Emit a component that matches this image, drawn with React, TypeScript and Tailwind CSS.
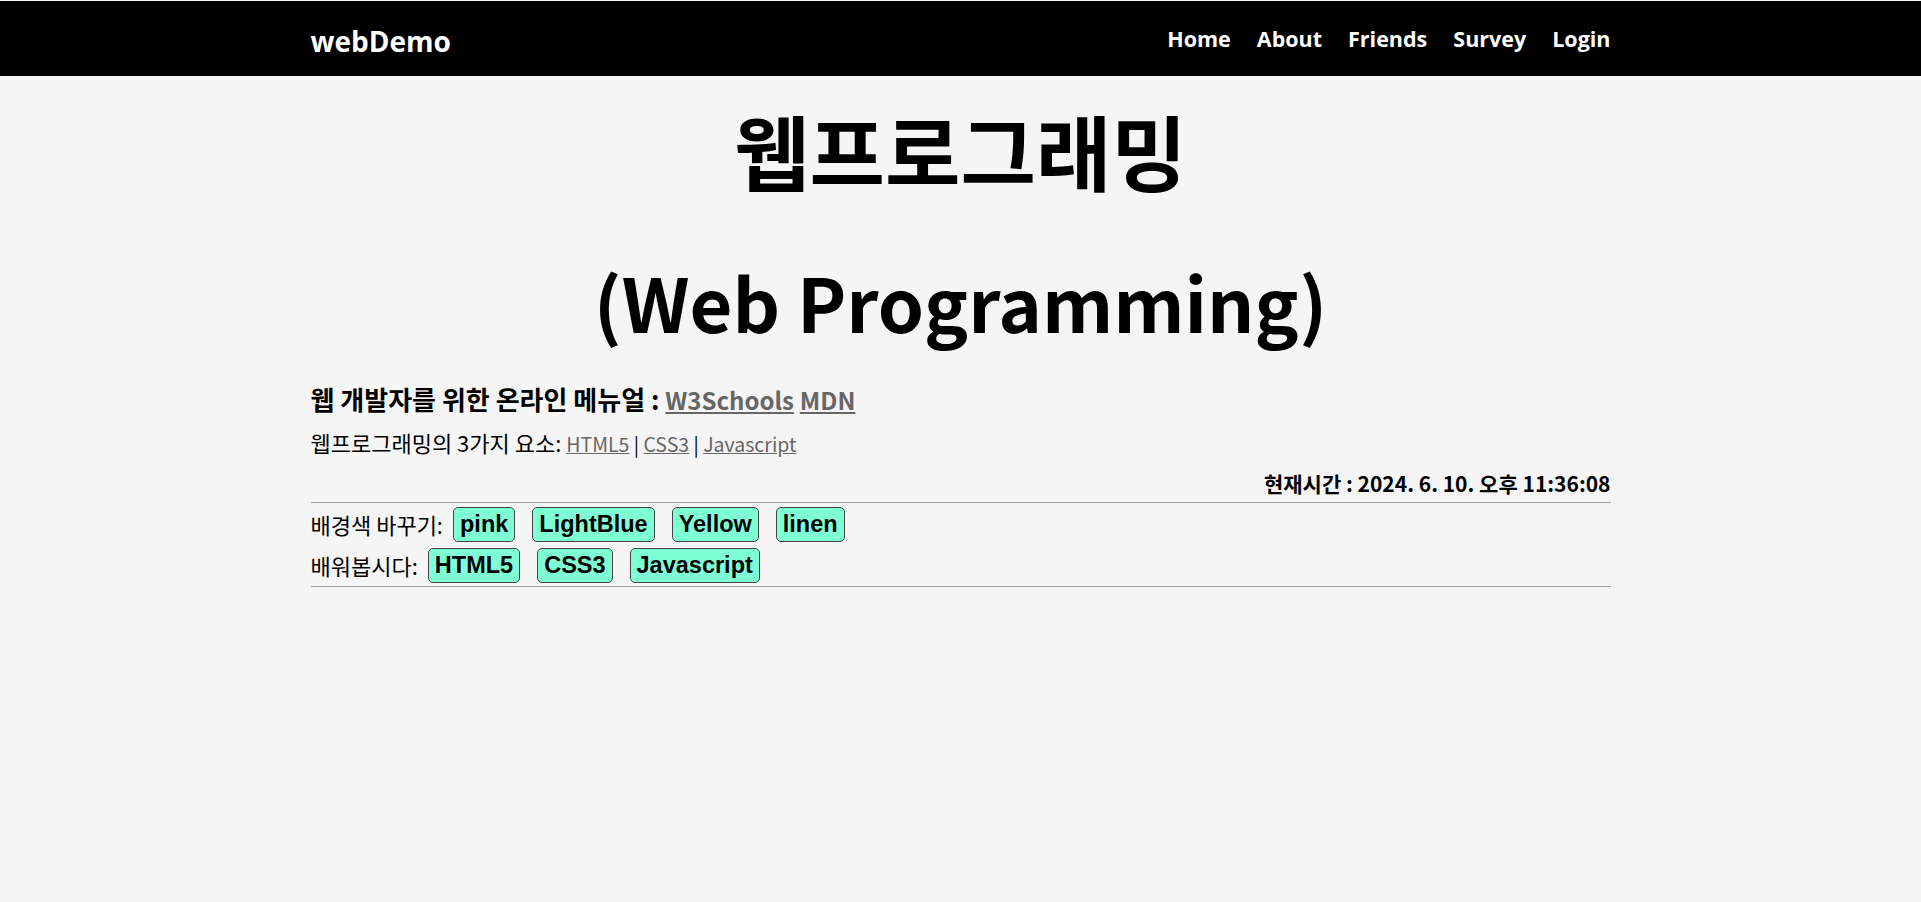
const links = ["Home", "About", "Friends", "Survey", "Login"];
const colors = ["pink", "LightBlue", "Yellow", "linen"];
const learn = ["HTML5", "CSS3", "Javascript"];

function Btn({ label }: { label: string }) {
  return (
    <button className="rounded-[5px] border border-[#444] bg-[#7fffd4] px-[6px] py-[3px] font-['Liberation_Sans',Arial,sans-serif] text-[23.5px] font-bold leading-[27px] text-black">
      {label}
    </button>
  );
}

export default function App() {
  return (
    <div className="min-h-screen bg-[#f5f5f5] pt-px font-['Noto_Sans_CJK_KR','Open_Sans',sans-serif] text-black">
      {/* Nav */}
      <header className="h-[75px] bg-black font-['Open_Sans','Noto_Sans_CJK_KR',sans-serif]">
        <div className="mx-auto flex h-full w-[1300px] items-center justify-between">
          <span className="mt-[4px] text-[28px] font-bold text-white">webDemo</span>
          <nav className="mt-[2px] flex items-center gap-[26px] text-[21.5px] font-bold text-white">
            {links.map((l) => (
              <a key={l} href="#">{l}</a>
            ))}
          </nav>
        </div>
      </header>

      <main className="mx-auto w-[1300px]">
        <h1 className="text-center font-bold">
          <div className="mt-[24px] text-[82px] leading-[100px]">웹프로그래밍</div>
          <div className="mt-[51px] text-[74px] leading-[100px]">(Web Programming)</div>
        </h1>

        <div className="mt-[28px] h-[40px] text-[26px] font-bold leading-[40px]">
          웹 개발자를 위한 온라인 메뉴얼 :{" "}
          <a href="#" className="text-[24px] leading-[20px] text-[#666] underline">W3Schools</a>{" "}
          <a href="#" className="text-[24px] leading-[20px] text-[#666] underline">MDN</a>
        </div>

        <div className="mt-[3px] h-[40px] text-[22px] leading-[40px]">
          웹프로그래밍의 3가지 요소:{" "}
          <span className="text-[19.5px] leading-[20px]">
            <a href="#" className="text-[#666] underline">HTML5</a>&nbsp;|{" "}
            <a href="#" className="text-[#666] underline">CSS3</a>&nbsp;|{" "}
            <a href="#" className="text-[#666] underline">Javascript</a>
          </span>
        </div>

        <div className="mt-[2px] text-right text-[21px] font-bold leading-[38px]">
          현재시간 : 2024. 6. 10. 오후 11:36:08
        </div>

        <div className="h-px bg-[#a0a0a0]" />

        <div className="mt-[4px] flex items-center text-[22px]">
          <span>배경색 바꾸기:</span>
          <div className="ml-[10px] flex gap-[17px]">
            {colors.map((c) => (
              <Btn key={c} label={c} />
            ))}
          </div>
        </div>
        <div className="mt-[6px] flex items-center text-[22px]">
          <span>배워봅시다:</span>
          <div className="ml-[10px] flex gap-[17px]">
            {learn.map((c) => (
              <Btn key={c} label={c} />
            ))}
          </div>
        </div>

        <div className="mt-[3px] h-px bg-[#a0a0a0]" />
      </main>
    </div>
  );
}
